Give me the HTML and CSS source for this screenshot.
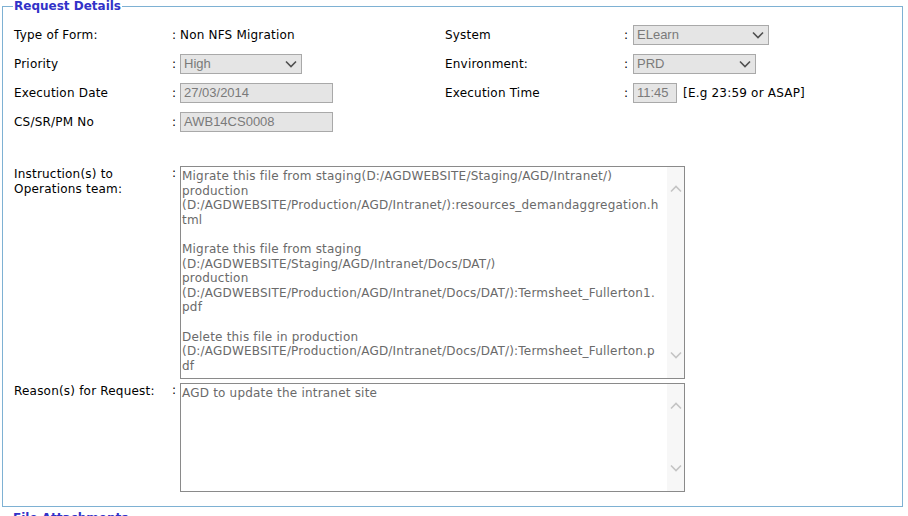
FILE: index.html
```html
<!DOCTYPE html>
<html>
<head>
<meta charset="utf-8">
<link rel="stylesheet" href="styles.css">
</head>
<body>
<fieldset class="box">
  <legend class="legend">Request Details</legend>
  <div class="grid">
    <div class="row">
      <div class="half left">
        <span class="lbl">Type of Form:</span><span class="colon">:</span><span class="val">Non NFS Migration</span>
      </div>
      <div class="half right">
        <span class="lbl">System</span><span class="colon">:</span>
        <div class="select w-sys"><span>ELearn</span><svg class="chev" viewBox="0 0 12 8"><path d="M1 1.5 L6 6.5 L11 1.5" /></svg></div>
      </div>
    </div>
    <div class="row">
      <div class="half left">
        <span class="lbl">Priority</span><span class="colon">:</span>
        <div class="select w-pri"><span>High</span><svg class="chev" viewBox="0 0 12 8"><path d="M1 1.5 L6 6.5 L11 1.5" /></svg></div>
      </div>
      <div class="half right">
        <span class="lbl">Environment:</span><span class="colon">:</span>
        <div class="select w-env"><span>PRD</span><svg class="chev" viewBox="0 0 12 8"><path d="M1 1.5 L6 6.5 L11 1.5" /></svg></div>
      </div>
    </div>
    <div class="row">
      <div class="half left">
        <span class="lbl">Execution Date</span><span class="colon">:</span>
        <div class="input w-date">27/03/2014</div>
      </div>
      <div class="half right">
        <span class="lbl">Execution Time</span><span class="colon">:</span>
        <div class="input w-time">11:45</div><span class="hint">[E.g 23:59 or ASAP]</span>
      </div>
    </div>
    <div class="row">
      <div class="half left">
        <span class="lbl">CS/SR/PM No</span><span class="colon">:</span>
        <div class="input w-date">AWB14CS0008</div>
      </div>
    </div>
  </div>

  <div class="arow first">
    <span class="lbl">Instruction(s) to<br>Operations team:</span><span class="colon">:</span>
    <div class="area tall">
      <div class="area-text">Migrate this file from staging(D:/AGDWEBSITE/Staging/AGD/Intranet/)
production
(D:/AGDWEBSITE/Production/AGD/Intranet/):resources_demandaggregation.h
tml

Migrate this file from staging
(D:/AGDWEBSITE/Staging/AGD/Intranet/Docs/DAT/)
production
(D:/AGDWEBSITE/Production/AGD/Intranet/Docs/DAT/):Termsheet_Fullerton1.
pdf

Delete this file in production
(D:/AGDWEBSITE/Production/AGD/Intranet/Docs/DAT/):Termsheet_Fullerton.p
df</div>
      <div class="sbar tall-bar"><svg class="sc" viewBox="0 0 12 8"><path d="M1 6.5 L6 1.5 L11 6.5"/></svg><svg class="sc" viewBox="0 0 12 8"><path d="M1 1.5 L6 6.5 L11 1.5"/></svg></div>
    </div>
  </div>
  <div class="arow">
    <span class="lbl">Reason(s) for Request:</span><span class="colon">:</span>
    <div class="area short">
      <div class="area-text">AGD to update the intranet site</div>
      <div class="sbar short-bar"><svg class="sc" viewBox="0 0 12 8"><path d="M1 6.5 L6 1.5 L11 6.5"/></svg><svg class="sc" viewBox="0 0 12 8"><path d="M1 1.5 L6 6.5 L11 1.5"/></svg></div>
    </div>
  </div>
</fieldset>
<fieldset class="box next">
  <legend class="legend">File Attachments</legend>
</fieldset>
</body>
</html>
```
FILE: styles.css
```css
html, body {
  margin: 0;
  padding: 0;
  background: #fff;
}
body {
  font-family: "DejaVu Sans", Verdana, sans-serif;
  font-size: 12px;
  letter-spacing: 0.2px;
  color: #000;
  overflow: hidden;
}
.box {
  margin: 0 5px 0 2px;
  border: 1px solid #7eb1d3;
  padding: 7px 0 14px 11px;
  min-width: 0;
}
.legend {
  color: #3232c8;
  font-weight: bold;
  font-size: 12px;
  line-height: 13px;
  letter-spacing: 0;
  padding: 0 1px;
  margin-left: -1px;
}
.row {
  display: flex;
  height: 29px;
}
.half {
  display: flex;
  align-items: center;
}
.left { width: 431px; }
.left .lbl { width: 158px; }
.right .lbl { width: 179px; }
.colon {
  width: 8px;
}
.right .colon { width: 9px; }
.select, .input {
  box-sizing: border-box;
  height: 20px;
  background: #e5e5e5;
  border: 1px solid #a9a9a9;
  color: #7a7a7a;
  display: flex;
  align-items: center;
  padding-left: 3px;
  font-family: "Liberation Sans", Arial, sans-serif;
  font-size: 13px;
  letter-spacing: 0;
}
.select { justify-content: space-between; padding-right: 4px; }
.chev {
  width: 12px;
  height: 8px;
  fill: none;
  stroke: #505050;
  stroke-width: 1.6;
}
.w-sys { width: 136px; }
.w-pri { width: 122px; }
.w-env { width: 123px; }
.w-date { width: 153px; }
.w-time { width: 44px; }
.hint { margin-left: 6px; }
.arow {
  display: flex;
  align-items: flex-start;
  margin-top: 4px;
}
.arow.first { margin-top: 30px; }
.arow .lbl { width: 158px; padding-top: 1px; line-height: 15px; }
.arow .colon { line-height: 15px; }
.area {
  box-sizing: border-box;
  width: 505px;
  border: 1px solid #8a8a8a;
  display: flex;
  background: #fff;
}
.area.tall { height: 213px; }
.area.short { height: 109px; }
.area-text {
  flex: 1;
  white-space: pre;
  overflow: hidden;
  color: #6a6a6a;
  padding: 2px 0 0 1px;
  line-height: 14.6px;
}
.sbar {
  width: 17px;
  background: #f7f7f7;
  display: flex;
  flex-direction: column;
  justify-content: space-between;
  align-items: center;
}
.tall-bar { padding: 18px 0 19px; }
.short-bar { padding: 18px 0 19px; }
.sc {
  width: 12px;
  height: 8px;
  fill: none;
  stroke: #c4c4c4;
  stroke-width: 1.6;
}
.next {
  margin-top: 5px;
  border: none;
  padding: 0 0 0 11px;
}
```
